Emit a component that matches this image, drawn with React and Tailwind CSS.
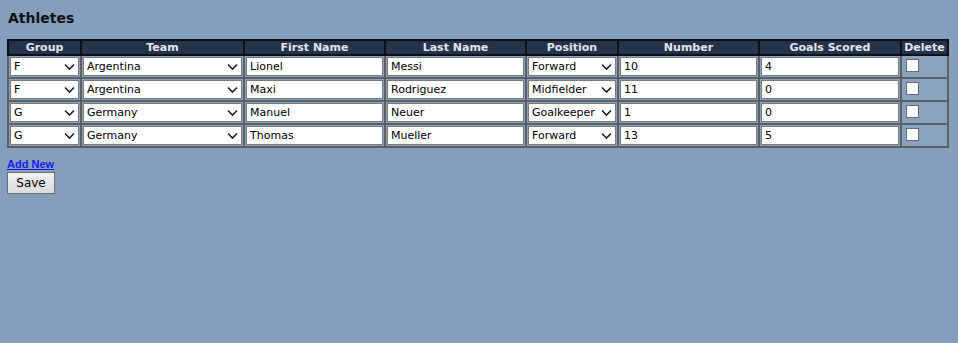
import React from 'react';

const athletes = [
  { group: 'F', team: 'Argentina', first: 'Lionel', last: 'Messi', position: 'Forward', number: '10', goals: '4' },
  { group: 'F', team: 'Argentina', first: 'Maxi', last: 'Rodriguez', position: 'Midfielder', number: '11', goals: '0' },
  { group: 'G', team: 'Germany', first: 'Manuel', last: 'Neuer', position: 'Goalkeeper', number: '1', goals: '0' },
  { group: 'G', team: 'Germany', first: 'Thomas', last: 'Mueller', position: 'Forward', number: '13', goals: '5' },
];

function Chevron() {
  return (
    <svg className="pointer-events-none absolute right-[4px] top-1/2 -translate-y-1/2" width="11" height="7" viewBox="0 0 11 7" fill="none">
      <path d="M1 1l4.5 4.5L10 1" stroke="#222" strokeWidth="1.6" />
    </svg>
  );
}

function Select({ value, options }) {
  return (
    <div className="relative">
      <select
        defaultValue={value}
        className="block h-[19px] w-full appearance-none border border-[#7a7a7a] bg-white pl-[3px] pr-[16px] text-[11px] leading-[17px] text-black outline-none"
      >
        {options.map(o => (
          <option key={o} value={o}>{o}</option>
        ))}
      </select>
      <Chevron />
    </div>
  );
}

function TextBox({ value }) {
  return (
    <input
      type="text"
      defaultValue={value}
      className="block h-[19px] w-full border border-[#7a7a7a] bg-white px-[3px] text-[11px] text-black outline-none"
    />
  );
}

export default function App() {
  const headers = ['Group', 'Team', 'First Name', 'Last Name', 'Position', 'Number', 'Goals Scored', 'Delete'];

  return (
    <div className="min-h-[343px] w-full bg-[#849fbb] px-[7px] pt-[10px] font-['DejaVu_Sans',Verdana,sans-serif]">
      <h2 className="mb-[12px] pl-[1px] text-[14px] font-bold leading-[17px] text-[#111]">Athletes</h2>

      <table className="w-[940px] table-fixed border-collapse border-2 border-[#5c5f63]">
        <colgroup>
          <col className="w-[73px]" />
          <col className="w-[163px]" />
          <col className="w-[141px]" />
          <col className="w-[141px]" />
          <col className="w-[92px]" />
          <col className="w-[141px]" />
          <col className="w-[142px]" />
          <col className="w-[47px]" />
        </colgroup>
        <thead>
          <tr>
            {headers.map(h => (
              <th key={h} className="h-[15px] border-2 border-[#0d1014] bg-[#25334a] p-0 text-center text-[11px] font-bold leading-[11px] text-[#e0e6ee]">
                {h}
              </th>
            ))}
          </tr>
        </thead>
        <tbody>
          {athletes.map((a, i) => (
            <tr key={i}>
              <td className="border-2 border-[#5c5f63] bg-[#8aa2bd] p-[1px]">
                <Select value={a.group} options={['A', 'B', 'C', 'D', 'E', 'F', 'G', 'H']} />
              </td>
              <td className="border-2 border-[#5c5f63] bg-[#8aa2bd] p-[1px]">
                <Select value={a.team} options={['Argentina', 'Germany']} />
              </td>
              <td className="border-2 border-[#5c5f63] bg-[#8aa2bd] p-[1px]">
                <TextBox value={a.first} />
              </td>
              <td className="border-2 border-[#5c5f63] bg-[#8aa2bd] p-[1px]">
                <TextBox value={a.last} />
              </td>
              <td className="border-2 border-[#5c5f63] bg-[#8aa2bd] p-[1px]">
                <Select value={a.position} options={['Forward', 'Midfielder', 'Goalkeeper', 'Defender']} />
              </td>
              <td className="border-2 border-[#5c5f63] bg-[#8aa2bd] p-[1px]">
                <TextBox value={a.number} />
              </td>
              <td className="border-2 border-[#5c5f63] bg-[#8aa2bd] p-[1px]">
                <TextBox value={a.goals} />
              </td>
              <td className="border-2 border-[#5c5f63] bg-[#8aa2bd] px-[4px] py-[1px] align-top">
                <span className="mt-[2px] block h-[13px] w-[13px] border border-[#6b6b6b] bg-white" />
              </td>
            </tr>
          ))}
        </tbody>
      </table>

      <div className="mt-[11px]">
        <a href="#" className="block font-['Liberation_Sans',Arial,sans-serif] text-[11px] font-bold leading-[11px] text-[#1a1aee] underline">Add New</a>
        <button className="mt-[2px] block h-[22px] w-[48px] border border-[#707070] bg-gradient-to-b from-[#f2f2f2] to-[#dadada] text-[12px] leading-[20px] text-black">
          Save
        </button>
      </div>
    </div>
  );
}
